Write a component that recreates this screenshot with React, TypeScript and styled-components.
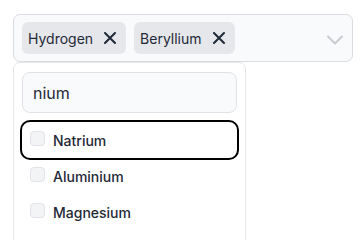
import React from 'react';
import styled, { createGlobalStyle } from 'styled-components';

const GlobalStyle = createGlobalStyle`
  html, body {
    margin: 0;
    padding: 0;
    background: #fff;
    font-family: Inter, "Noto Sans", sans-serif;
    color: #1f2937;
  }
`;

const Page = styled.div`
  position: relative;
  width: 363px;
  height: 240px;
  padding: 14px 0 0 13px;
  box-sizing: border-box;
  overflow: hidden;
`;

const SelectBox = styled.div`
  width: 340px;
  height: 48px;
  box-sizing: border-box;
  display: flex;
  align-items: center;
  padding: 0 9px 0 8px;
  border: 1px solid #d9dce1;
  border-radius: 7px;
  background: #f9fafb;
`;

const Chips = styled.div`
  display: flex;
  gap: 8px;
  flex: 1;
`;

const Chip = styled.span`
  display: inline-flex;
  align-items: center;
  height: 32px;
  padding: 0 10px 0 6px;
  gap: 11px;
  border-radius: 6px;
  background: #e5e7eb;
  font-size: 14px;
  font-weight: 400;
  color: #1f2937;
`;

const Chevron = styled.svg`
  width: 16px;
  height: 16px;
  color: #c9ccd1;
  margin-top: 4px;
`;

const Menu = styled.div`
  position: absolute;
  top: 62px;
  left: 13px;
  width: 233px;
  height: 190px;
  box-sizing: border-box;
  padding: 9px 8px 0 8px;
  background: #fff;
  border: 1px solid #e5e7eb;
  border-radius: 7px;
`;

const Search = styled.div`
  height: 41px;
  box-sizing: border-box;
  display: flex;
  align-items: center;
  padding: 0 10px;
  border: 1px solid #dfe2e6;
  border-radius: 8px;
  background: #f9fafb;
  font-size: 16px;
  color: #1f2937;
  margin-bottom: 9px;
`;

const Option = styled.div<{ $active?: boolean }>`
  height: 36px;
  box-sizing: border-box;
  display: flex;
  align-items: center;
  gap: 8px;
  padding: 0 8px;
  border-radius: 8px;
  font-size: 14px;
  font-weight: 500;
  color: #1f2937;
  outline: ${(p) => (p.$active ? '2px solid #000' : 'none')};
`;

const Box = styled.span`
  flex-shrink: 0;
  width: 15px;
  height: 15px;
  margin-top: -3px;
  box-sizing: border-box;
  border: 1px solid #e0e3e7;
  border-radius: 4px;
  background: #f3f4f6;
`;

const XIcon = () => (
  <svg width="12" height="12" viewBox="0 0 12 12" fill="none" stroke="#1f2937" strokeWidth="2" strokeLinecap="round">
    <path d="M1 1l10 10M11 1L1 11" />
  </svg>
);

const selected = ['Hydrogen', 'Beryllium'];
const options = ['Natrium', 'Aluminium', 'Magnesium'];

export default function App() {
  return (
    <Page>
      <GlobalStyle />
      <SelectBox>
        <Chips>
          {selected.map((s) => (
            <Chip key={s}>
              {s}
              <XIcon />
            </Chip>
          ))}
        </Chips>
        <Chevron viewBox="0 0 16 16" fill="none" stroke="currentColor" strokeWidth="2" strokeLinecap="round" strokeLinejoin="round">
          <path d="M1 4.5l7 7 7-7" />
        </Chevron>
      </SelectBox>
      <Menu>
        <Search>nium</Search>
        {options.map((o, i) => (
          <Option key={o} $active={i === 0}>
            <Box />
            {o}
          </Option>
        ))}
      </Menu>
    </Page>
  );
}
